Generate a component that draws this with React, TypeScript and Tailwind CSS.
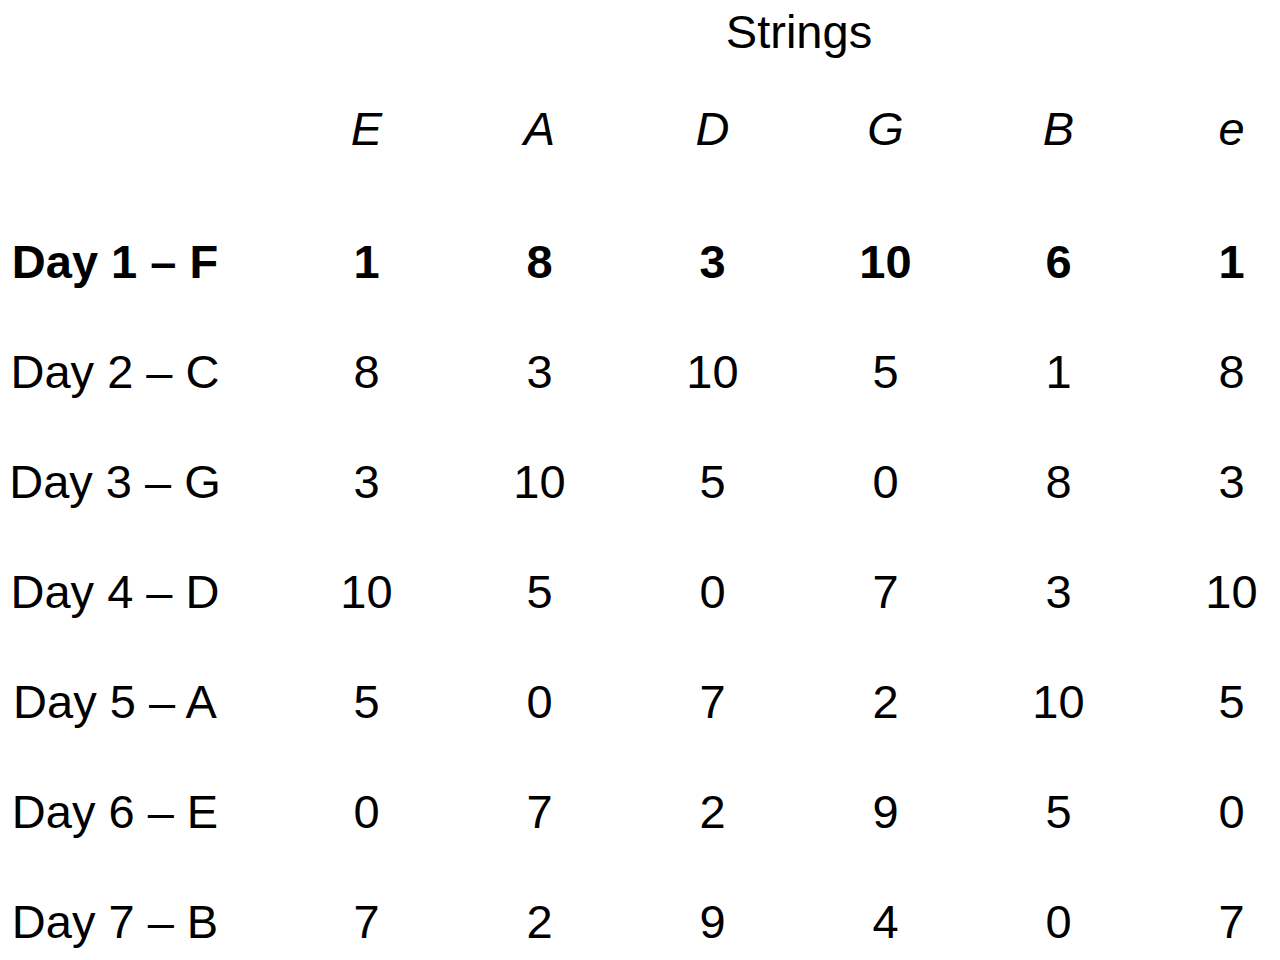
const strings = ['E', 'A', 'D', 'G', 'B', 'e'];

const rows: { label: string; frets: number[] }[] = [
  { label: 'Day 1 – F', frets: [1, 8, 3, 10, 6, 1] },
  { label: 'Day 2 – C', frets: [8, 3, 10, 5, 1, 8] },
  { label: 'Day 3 – G', frets: [3, 10, 5, 0, 8, 3] },
  { label: 'Day 4 – D', frets: [10, 5, 0, 7, 3, 10] },
  { label: 'Day 5 – A', frets: [5, 0, 7, 2, 10, 5] },
  { label: 'Day 6 – E', frets: [0, 7, 2, 9, 5, 0] },
  { label: 'Day 7 – B', frets: [7, 2, 9, 4, 0, 7] },
];

export default function App() {
  return (
    <div className="w-[1280px] h-[960px] overflow-hidden bg-white text-black font-['Liberation_Sans',Arial,sans-serif] text-[47px]">
      {/* Title */}
      <div className="grid grid-cols-[280px_repeat(6,173px)] h-[74px] leading-[64px]">
        <div className="col-start-4 col-span-2 text-center">Strings</div>
      </div>

      {/* String names */}
      <div className="grid grid-cols-[280px_repeat(6,173px)] leading-[110px] mb-[23px]">
        <div />
        {strings.map((s, i) => (
          <div key={i} className="text-center italic">
            {s}
          </div>
        ))}
      </div>

      {/* Days */}
      {rows.map((row, r) => (
        <div
          key={row.label}
          className={`grid grid-cols-[280px_repeat(6,173px)] leading-[110px] ${r === 0 ? 'font-bold' : ''}`}
        >
          <div className="w-[230px] text-center whitespace-nowrap">{row.label}</div>
          {row.frets.map((f, i) => (
            <div key={i} className="text-center">
              {f}
            </div>
          ))}
        </div>
      ))}
    </div>
  );
}
